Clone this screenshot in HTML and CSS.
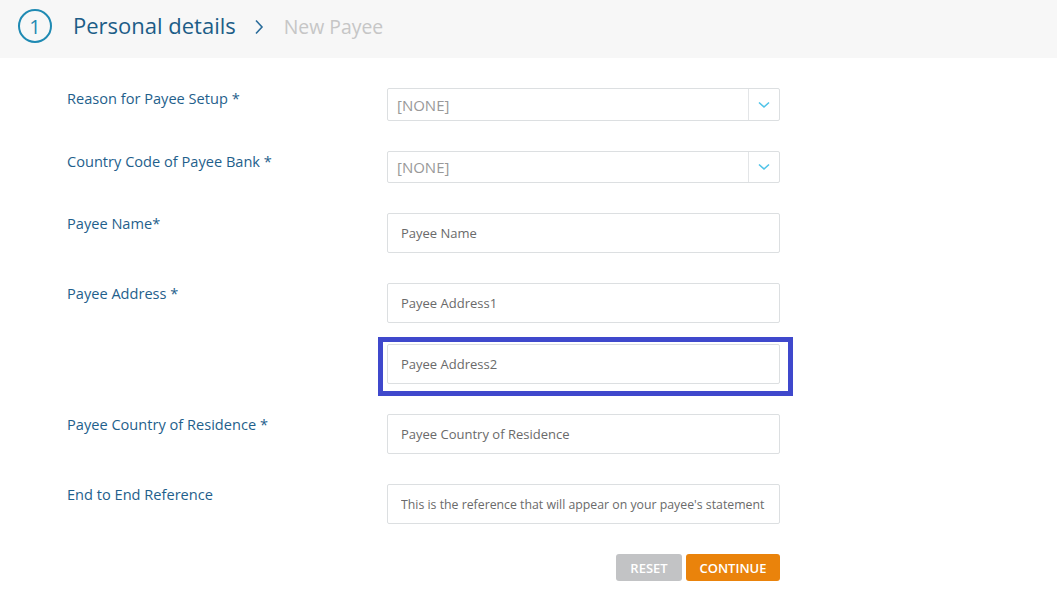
FILE: index.html
```html
<!DOCTYPE html>
<html lang="en">
<head>
    <meta charset="UTF-8">
    <title>New Payee</title>
    <link rel="stylesheet" href="styles.css">
</head>
<body>
<div class="header">
    <span class="step">1</span>
    <span class="step-title">Personal details</span>
    <svg class="crumb-arrow" width="10" height="16" viewBox="0 0 10 16"><path d="M2 1.5 L8 8 L2 14.5" fill="none" stroke="#2a6c9a" stroke-width="1.6"/></svg>
    <span class="step-next">New Payee</span>
</div>

<form class="payee-form">
    <label class="field-label">Reason for Payee Setup *</label>
    <div class="select-box first-select">
        <span>[NONE]</span>
        <span class="select-arrow"><svg width="12" height="8" viewBox="0 0 12 8"><path d="M1 1.5 L6 6 L11 1.5" fill="none" stroke="#4fc3e8" stroke-width="1.6"/></svg></span>
    </div>

    <label class="field-label">Country Code of Payee Bank *</label>
    <div class="select-box">
        <span>[NONE]</span>
        <span class="select-arrow"><svg width="12" height="8" viewBox="0 0 12 8"><path d="M1 1.5 L6 6 L11 1.5" fill="none" stroke="#4fc3e8" stroke-width="1.6"/></svg></span>
    </div>

    <label class="field-label">Payee Name*</label>
    <input class="text-input" type="text" placeholder="Payee Name">

    <label class="field-label">Payee Address *</label>
    <div class="field-stack">
        <input class="text-input" type="text" placeholder="Payee Address1">
        <div class="highlight-wrap">
            <input class="text-input" type="text" placeholder="Payee Address2">
            <span class="highlight"></span>
        </div>
    </div>

    <label class="field-label">Payee Country of Residence *</label>
    <input class="text-input" type="text" placeholder="Payee Country of Residence">

    <label class="field-label">End to End Reference</label>
    <input class="text-input small-hint" type="text" placeholder="This is the reference that will appear on your payee's statement">

    <div></div>
    <div class="actions">
        <button type="button" class="btn btn-reset">RESET</button>
        <button type="button" class="btn btn-continue">CONTINUE</button>
    </div>
</form>
</body>
</html>
```

FILE: styles.css
```css
body {
    margin: 0;
    font-family: 'Open Sans', 'Liberation Sans', sans-serif;
    background-color: #fff;
    color: #333;
}

.header {
    height: 58px;
    background-color: #f7f7f7;
    display: flex;
    align-items: center;
    padding-left: 18px;
    box-sizing: border-box;
}

.step {
    width: 34px;
    height: 34px;
    border: 2px solid #1f8ab3;
    border-radius: 50%;
    box-sizing: border-box;
    display: flex;
    align-items: center;
    justify-content: center;
    color: #1f8ab3;
    font-size: 20px;
    margin-top: -6px;
}

.step-title {
    margin-left: 21px;
    font-size: 22px;
    color: #1c5d87;
    margin-top: -8px;
}

.crumb-arrow {
    margin-left: 18px;
    margin-top: -4px;
}

.step-next {
    margin-left: 20px;
    font-size: 19.4px;
    color: #c6c6c6;
    margin-top: -5px;
}

.payee-form {
    display: grid;
    grid-template-columns: 320px 393px;
    row-gap: 30px;
    padding: 30px 0 0 67px;
}

.field-label {
    font-size: 14.6px;
    line-height: 20px;
    color: #1f5f8c;
}

.select-box {
    height: 32px;
    border: 1px solid #dcdfe1;
    border-radius: 2px;
    box-sizing: border-box;
    display: flex;
    align-items: center;
    justify-content: space-between;
    padding-left: 9px;
    font-size: 15px;
    color: #999;
}

.first-select {
    height: 33px;
}

.select-arrow {
    width: 30px;
    height: 100%;
    border-left: 1px solid #e3e5e7;
    display: flex;
    align-items: center;
    justify-content: center;
}

.text-input {
    display: block;
    width: 100%;
    height: 40px;
    border: 1px solid #dcdfe1;
    border-radius: 2px;
    box-sizing: border-box;
    padding: 0 13px;
    font-family: 'Open Sans', 'Liberation Sans', sans-serif;
    font-size: 13px;
    color: #555;
}

.text-input::placeholder {
    color: #6a6a6a;
}

.small-hint {
    font-size: 12.3px;
}

.field-stack {
    display: flex;
    flex-direction: column;
    gap: 21px;
}

.highlight-wrap {
    position: relative;
}

.highlight {
    position: absolute;
    left: -9px;
    top: -7px;
    right: -13px;
    bottom: -12px;
    border: 5px solid #3f48cc;
    pointer-events: none;
}

.actions {
    display: flex;
    justify-content: flex-end;
    gap: 4px;
}

.btn {
    height: 27px;
    border: none;
    border-radius: 3px;
    color: #fff;
    font-family: 'Open Sans', 'Liberation Sans', sans-serif;
    font-size: 13px;
    font-weight: 600;
    padding: 0;
    cursor: pointer;
}

.btn-reset {
    width: 66px;
    background-color: #c2c3c5;
}

.btn-continue {
    width: 94px;
    background-color: #ea830b;
}
```
